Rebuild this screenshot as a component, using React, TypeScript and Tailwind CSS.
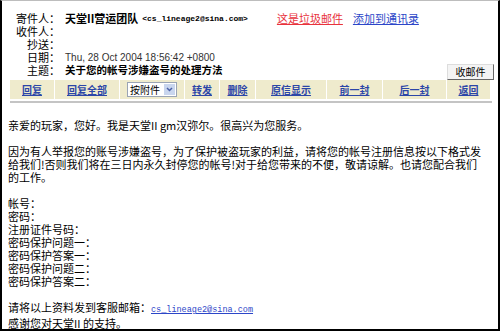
const CJK = "font-['Noto_Sans_CJK_SC',sans-serif]";

function HeaderRow({ label, children }: { label: string; children?: React.ReactNode }) {
  return (
    <div className="flex h-[13px] items-center">
      <div className="w-[58px] shrink-0 text-right leading-none">{label}</div>
      <div className="ml-[5px] flex flex-1 items-center leading-none">{children}</div>
    </div>
  );
}

function ToolLink({ label, w }: { label: string; w: number }) {
  return (
    <div
      className="flex h-full items-center justify-center border-r border-white last:border-r-0"
      style={{ width: w }}
    >
      <span className="font-bold text-[#2c46a8] underline decoration-[#2c46a8]">{label}</span>
    </div>
  );
}

export default function App() {
  return (
    <div className={`${CJK} h-[331px] w-[500px] overflow-hidden border-x-2 border-b-2 border-t border-b-black border-l-black border-r-black border-t-[#bdbdbd] bg-white text-black`}>
      <div className="pt-[11px] text-[11px]">
        <HeaderRow label="寄件人：">
          <span className="font-bold">天堂II营运团队</span>
          <span className="ml-[4px] font-['Liberation_Mono',monospace] text-[8px] font-bold">&lt;cs_lineage2@sina.com&gt;</span>
          <span className="ml-[29px] text-[#e8323c] underline">这是垃圾邮件</span>
          <span className="ml-[10px] text-[#2c46c8] underline">添加到通讯录</span>
        </HeaderRow>
        <HeaderRow label="收件人：" />
        <HeaderRow label="抄送：" />
        <HeaderRow label="日期：">
          <span className="font-['Liberation_Sans',sans-serif] text-[10px] text-[#333]">
            Thu, 28 Oct 2004 18:56:42 +0800
          </span>
        </HeaderRow>
        <div className="flex h-[13px] items-center">
          <div className="w-[58px] shrink-0 text-right leading-none">主题：</div>
          <div className="ml-[5px] flex-1 text-[10.5px] font-bold leading-none">关于您的帐号涉嫌盗号的处理方法</div>
          <button className="mr-[4px] flex h-[16px] w-[47px] self-start items-center justify-center border border-[#666] border-l-[#ddd] border-t-[#ddd] bg-[#f4f4f4] text-[10px] leading-none">
            收邮件
          </button>
        </div>
      </div>

      <div className="ml-[8px] mt-[3px] flex h-[19px] w-[480px] items-center bg-[#efebcd] text-[10px]">
        <ToolLink label="回复" w={45} />
        <ToolLink label="回复全部" w={65} />
        <div className="flex h-full w-[65px] items-center justify-center border-r border-white">
          <div className="flex h-[15px] w-[50px] items-center border border-[#9aa4b4] bg-white pl-[2px]">
            <span className="flex-1 leading-none">按附件</span>
            <span className="mr-[1px] flex h-[11px] w-[11px] items-center justify-center bg-[#c9d6ee]">
              <svg width="7" height="5" viewBox="0 0 7 5">
                <path d="M1 1 L3.5 3.5 L6 1" stroke="#4d62a8" strokeWidth="1.5" fill="none" />
              </svg>
            </span>
          </div>
        </div>
        <ToolLink label="转发" w={35} />
        <ToolLink label="删除" w={36} />
        <ToolLink label="原信显示" w={71} />
        <ToolLink label="前一封" w={56} />
        <ToolLink label="后一封" w={64} />
        <ToolLink label="返回" w={43} />
      </div>
      <div className="ml-[8px] mt-[2px] h-[2px] w-[482px] bg-[#c4c4c4]" />

      <div className="ml-[6px] mt-[16px] whitespace-nowrap text-[11px] leading-[13px]">
        <p>亲爱的玩家，您好。我是天堂II gm汉弥尔。很高兴为您服务。</p>
        <p className="mt-[13px]">
          因为有人举报您的账号涉嫌盗号，为了保护被盗玩家的利益，请将您的帐号注册信息按以下格式发
          <br />
          给我们!否则我们将在三日内永久封停您的帐号!对于给您带来的不便，敬请谅解。也请您配合我们
          <br />
          的工作。
        </p>
        <div className="mt-[13px]">
          <p>帐号：</p>
          <p>密码：</p>
          <p>注册证件号码：</p>
          <p>密码保护问题一：</p>
          <p>密码保护答案一：</p>
          <p>密码保护问题二：</p>
          <p>密码保护答案二：</p>
        </div>
        <p className="mt-[13px]">
          请将以上资料发到客服邮箱：
          <span className="font-['Liberation_Mono',monospace] text-[8.5px] text-[#2c46c8] underline">
            cs_lineage2@sina.com
          </span>
        </p>
        <p>感谢您对天堂II 的支持。</p>
      </div>
    </div>
  );
}
